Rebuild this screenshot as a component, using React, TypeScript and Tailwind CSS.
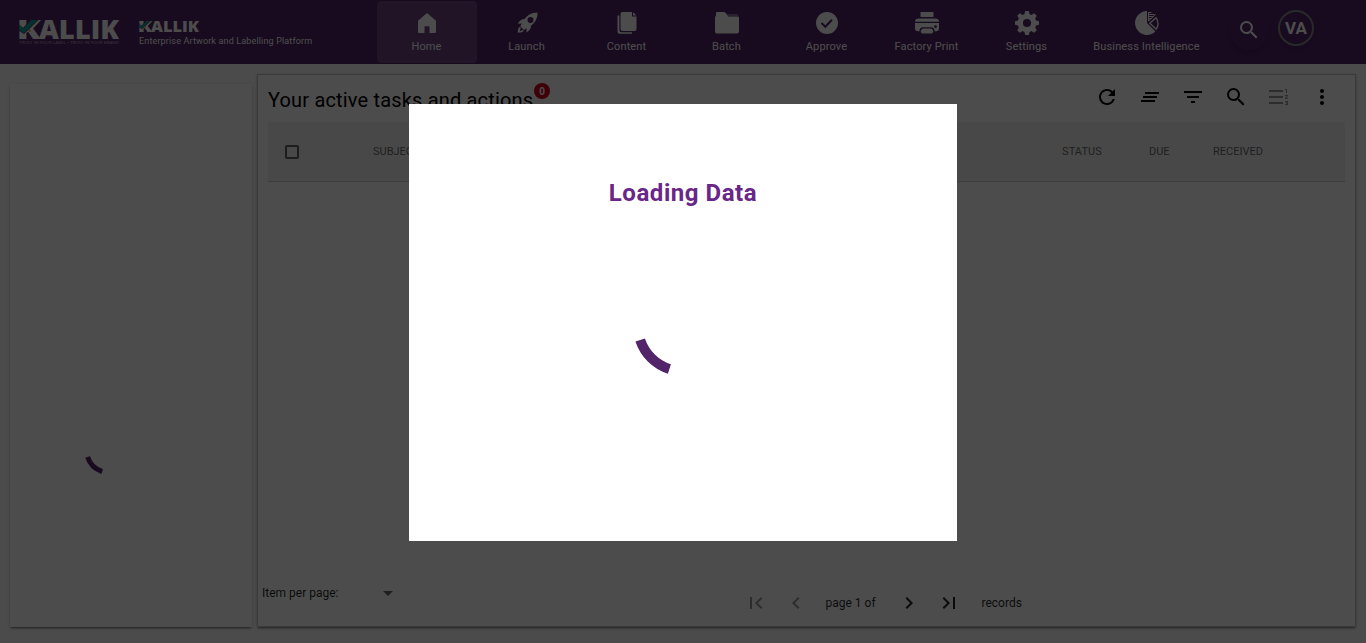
import type { ReactNode } from 'react';
import {
  MdRefresh, MdClearAll, MdFilterList, MdSearch, MdFormatListNumberedRtl, MdMoreVert,
  MdFirstPage, MdChevronLeft, MdChevronRight, MdLastPage, MdArrowDropDown,
} from 'react-icons/md';

function Logo({ className }: { className: string }) {
  return (
    <svg viewBox="0 0 100 19" preserveAspectRatio="none" className={className} overflow="visible">
      <g fontFamily='"Open Sans", sans-serif' fontWeight="800" fontSize="26" fill="#fff">
        <text x="-2.300" y="18.800" textLength="24" lengthAdjust="spacingAndGlyphs">K</text>
        <text x="20" y="18.800" textLength="80" lengthAdjust="spacingAndGlyphs">ALLIK</text>
      </g>
      <path d="M-.5 4 4 8 11.500 0h8L5 14 -.5 10.500z" fill="#522369" />
      <path d="M0 4.500 4.300 8.500 12.500 0h6L4.500 13.500 0 9.500z" fill="#0ca39c" />
      <path d="m9 10.500 1.500-1.500 1.500 2-1.500 1z" fill="#e58b35" />
    </svg>
  );
}

function NavIcon({ children }: { children: ReactNode }) {
  return <svg viewBox="0 0 24 24" className="h-6 w-6" fill="#fff">{children}</svg>;
}

const teeth = [0, 45, 90, 135, 180, 225, 270, 315];

const tabs: { label: string; icon: ReactNode }[] = [
  { label: 'Home', icon: <path d="M12 2 3 9.800V21q0 1 1 1h5.500v-6.800h5V22H20q1 0 1-1V9.800z" /> },
  {
    label: 'Launch',
    icon: (
      <>
        <path fillRule="evenodd" d="M22.500 1.500C16.500 1.600 12.500 4.200 9.500 8 6.500 8 4.700 9.500 2.800 12.700l4-.2-1.600 2.700 3.700 3.700 2.700-1.600-.2 4.200c3.200-1.900 4.600-3.700 4.700-6.800 4-3 6.500-7.200 6.400-13.200M15.500 6a3 3 0 1 1 0 6 3 3 0 0 1 0-6" />
        <path d="M5 15.700c-2 1-2.200 3-2.200 6 3 0 5-.3 6-2.200l-1.800-.5c-.5.800-1.200 1-2.200 1 0-1 .3-1.700 1-2.200z" />
      </>
    ),
  },
  {
    label: 'Content',
    icon: (
      <>
        <path d="M2.500 4.500v15.700q0 2.500 2.500 2.500H17v-1.500H6.300q-1.900 0-1.900-1.900V4.500z" />
        <path d="M7.500 1H17v4.500h4.500V18q0 2-2 2h-12q-2 0-2-2V3q0-2 2-2m10.500.2 3.500 3.300H18z" />
      </>
    ),
  },
  {
    label: 'Batch',
    icon: (
      <>
        <path d="M1 2q0-1 1-1h7q1 0 1.700 1l1 1.500H1z" />
        <path d="M11 3h11q1.500 0 1.500 2H11z" opacity=".35" />
        <path d="M1 3h10.500l1.500 2.500h9.500q1.500 0 1.500 1v14q0 2-2 2H2q-2 0-2-2V6.500Q0 5 1 5z" />
      </>
    ),
  },
  {
    label: 'Approve',
    icon: (
      <>
        <circle cx="12" cy="12" r="11" />
        <path d="m7 12.500 3.300 3.300 6.200-6.600" fill="none" stroke="#522369" strokeWidth="2" strokeLinecap="round" />
      </>
    ),
  },
  {
    label: 'Factory Print',
    icon: (
      <>
        <path d="M5.500 1h13v5h-13zM4 7.500h16q4 0 4 3.300H0q0-3.300 4-3.300" />
        <path fillRule="evenodd" d="M0 12h24v5.500q0 2.800-3 2.800h-1.500c0-3-1.500-4-3.500-4H8c-2 0-3.500 1-3.500 4H3q-3 0-3-2.800zm20.500 2.200a1.400 1.400 0 1 0 0 2.800 1.400 1.400 0 0 0 0-2.800" />
        <path d="M8 17.500h8q1.700 0 2.300 3.500l-1.300 1.600H7L5.700 21q.6-3.500 2.300-3.500" />
      </>
    ),
  },
  {
    label: 'Settings',
    icon: (
      <>
        {teeth.map((a) => <path key={a} d="M9 5 10.200 0h3.600L15 5z" transform={`rotate(${a} 12 12)`} />)}
        <circle cx="12" cy="12" r="6.700" fill="none" stroke="#fff" strokeWidth="5.300" />
      </>
    ),
  },
  {
    label: 'Business Intelligence',
    icon: (
      <>
        <path d="M12 0v12l8.500 8.500A12 12 0 1 1 12 0" />
        <path d="M13.500 1v9l7-6.500M13.500 1.500h3M13.500 3.500h6M13.500 5.500h5M13.500 7.500h3" fill="none" stroke="#fff" strokeWidth="1" />
        <path d="M14.800 12.200 21 6.700q4 6 .2 11.500z" fill="none" stroke="#fff" strokeWidth="1.300" />
      </>
    ),
  },
];

const toolbar = [
  { Icon: MdRefresh, tone: 'text-black' },
  { Icon: MdClearAll, tone: 'text-black' },
  { Icon: MdFilterList, tone: 'text-black' },
  { Icon: MdSearch, tone: 'text-black' },
  { Icon: MdFormatListNumberedRtl, tone: 'text-black/40' },
  { Icon: MdMoreVert, tone: 'text-black' },
];

function Spinner({ className }: { className: string }) {
  return (
    <svg viewBox="0 0 100 100" className={className}>
      <path d="M7.200 64A45 45 0 0 0 36.400 93" fill="none" stroke="#52246a" strokeWidth="10" />
    </svg>
  );
}

export default function App() {
  return (
    <div className="relative flex h-[643px] flex-col overflow-hidden bg-[#fafafa] font-['Roboto',sans-serif] text-black">
      <header className="flex h-16 shrink-0 bg-[#522369] text-white">
        <div className="flex w-[377px] pl-[19px] pt-5">
          <div className="w-[100px]">
            <Logo className="h-[19px] w-[100px]" />
            <svg viewBox="0 0 100 6" className="mt-px h-[6px] w-[100px]" overflow="visible">
              <text x="0" y="4" fontSize="4" fontFamily='"Open Sans", sans-serif' fill="#fff" opacity=".6" textLength="100" lengthAdjust="spacingAndGlyphs">TRUST IN YOUR LABEL • TRUST IN YOUR BRAND</text>
            </svg>
          </div>
          <div className="ml-5 pt-px">
            <Logo className="h-[11px] w-[60px]" />
            <p className="mt-[3px] whitespace-nowrap text-[9px] leading-3 tracking-[0.15px]">Enterprise Artwork and Labelling Platform</p>
          </div>
        </div>
        <nav className="flex pt-px">
          {tabs.map(({ label, icon }, i) => (
            <div key={label} className={`flex h-[62px] flex-col items-center rounded pt-[10px] ${i === 0 ? 'bg-white/15' : ''} ${i === 7 ? 'w-[140px]' : 'w-[100px]'}`}>
              <NavIcon>{icon}</NavIcon>
              <span className="mt-1 whitespace-nowrap pr-px text-[11px] leading-4 tracking-[0.14px]">{label}</span>
            </div>
          ))}
        </nav>
        <div className="ml-3 mt-[10px] flex h-10 w-10 items-center justify-center rounded-full shadow-md">
          <MdSearch className="h-6 w-6" />
        </div>
        <div className="ml-[9px] mt-[10px] flex h-9 w-9 items-center justify-center rounded-full border-2 border-[#8a8a8a] pt-px text-[17px] font-bold shadow-md">VA</div>
      </header>

      <main className="flex min-h-0 flex-1 pl-[10px] pt-[10px]">
        <aside className="mt-[10px] h-[543px] w-[242px] bg-[#fdfdfd] pl-[50px] pt-[316px] shadow-[0_2px_2px_-1px_rgba(0,0,0,0.5),0_1px_3px_rgba(0,0,0,0.15)]">
          <div className="pl-[24px] pt-[25px]"><Spinner className="h-[50px] w-[50px]" /></div>
        </aside>
        <section className="ml-[5px] flex h-[553px] w-[1099px] flex-col border border-[#c4c4c4] bg-[#fdfdfd] shadow-[0_2px_2px_-1px_rgba(0,0,0,0.4),0_1px_3px_rgba(0,0,0,0.2)]">
          <div className="flex h-[47px] justify-between pl-[10px] pr-[21px]">
            <div className="flex">
              <h1 className="whitespace-nowrap pt-[11px] text-[20px] leading-7 tracking-[0.17px]">Your active tasks and actions</h1>
              <span className="ml-px mt-[8px] flex h-4 w-4 items-center justify-center rounded-full bg-[#d0021b] pt-px text-[10px] font-bold text-white">0</span>
            </div>
            <div className="flex gap-[19px] pt-[10px]">
              {toolbar.map(({ Icon, tone }, i) => <Icon key={i} className={`h-6 w-6 ${tone}`} />)}
            </div>
          </div>
          <div className="mx-[10px] flex h-[60px] items-center border-b border-[#d0d0d0] bg-[#f2f2f2] text-[11px] text-black/60">
            <span className="ml-[17px] h-[14px] w-[14px] rounded-[2px] border-2 border-black/60" />
            <span className="ml-[74px] w-[689px] pt-[2px]">SUBJECT</span>
            <span className="w-[87px] pt-[2px] tracking-[0.1px]">STATUS</span>
            <span className="w-[64px] pt-[2px]">DUE</span>
            <span className="pt-[2px]">RECEIVED</span>
          </div>
          <div className="flex-1" />
          <footer className="flex h-[56px] pl-px text-[12px] leading-4 text-black/85">
            <span className="w-[117px] pl-[3px] pt-[15px]">Item per page:</span>
            <MdArrowDropDown className="mt-[11px] h-6 w-6 text-black/60" />
            <div className="ml-[343.500px] flex items-center self-start pt-[21px]">
              <MdFirstPage className="h-6 w-6 text-black/40" />
              <MdChevronLeft className="ml-[16px] h-6 w-6 text-black/40" />
              <span className="ml-[18px] w-[71px]">page 1 of</span>
              <MdChevronRight className="h-6 w-6" />
              <MdLastPage className="ml-[16px] h-6 w-6" />
              <span className="ml-[21px]">records</span>
            </div>
          </footer>
        </section>
      </main>

      <div className="absolute inset-0 flex justify-center bg-black/70 pt-[104px]">
        <div className="flex h-[437px] w-[548px] flex-col items-center bg-white pt-[73px]">
          <h2 className="text-2xl font-bold leading-8 tracking-[0.55px] text-[#6a2688]">Loading Data</h2>
          <Spinner className="mt-[67px] h-[100px] w-[100px]" />
        </div>
      </div>
    </div>
  );
}
